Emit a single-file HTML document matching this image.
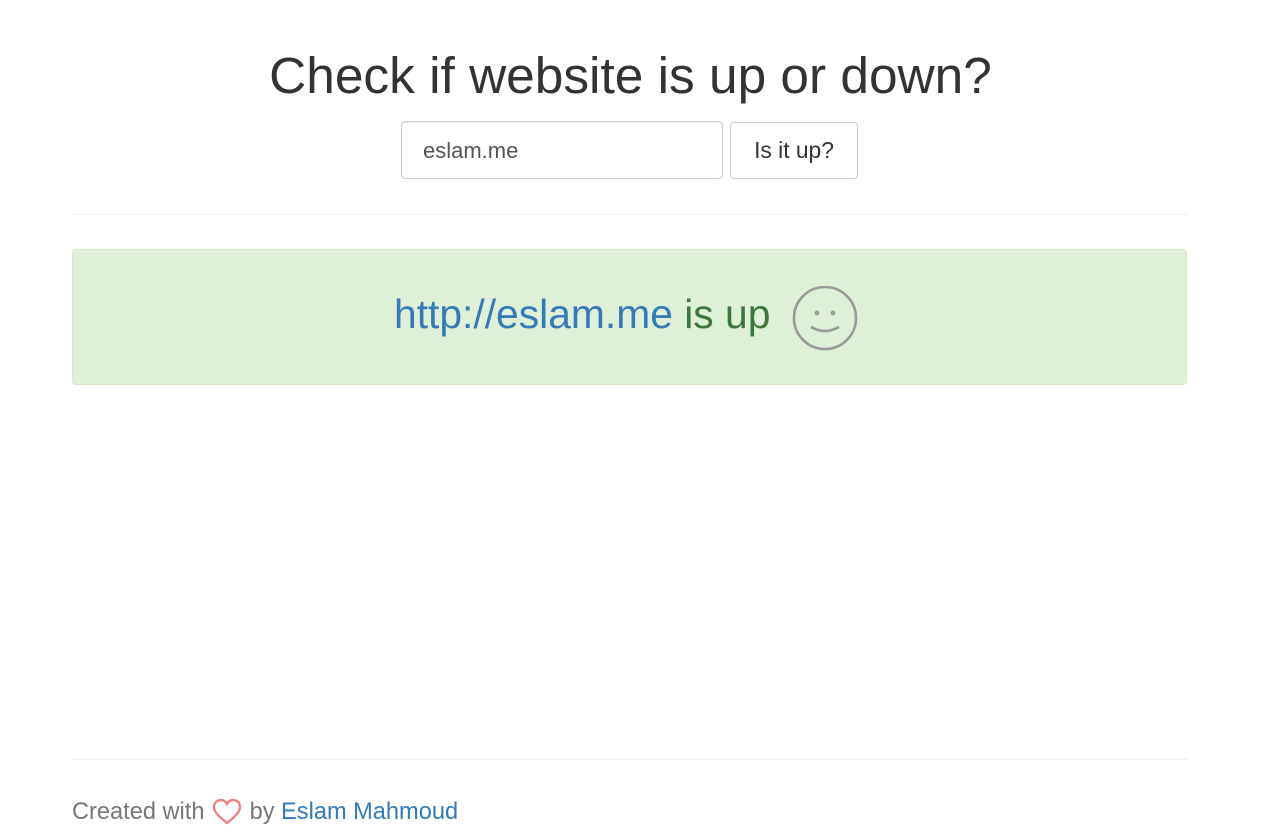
<!DOCTYPE html>
<html><head><meta charset="utf-8"><style>
body{margin:0;background:#fff;font-family:"Liberation Sans",sans-serif;color:#333;}
.wrap{position:relative;width:1261px;height:840px;}
h1{position:absolute;top:43px;left:0;width:1261px;text-align:center;margin:0;font-size:51.4px;font-weight:400;color:#333;line-height:64px;}
.inp{position:absolute;left:401px;top:121px;width:322px;height:58px;border:1px solid #ccc;border-radius:4px;box-sizing:border-box;font-size:22px;color:#555;padding:16px 21px;box-shadow:inset 0 1px 1px rgba(0,0,0,.075);}
.btn{position:absolute;left:730px;top:122px;width:128px;height:57px;border:1px solid #ccc;border-radius:4px;box-sizing:border-box;font-size:22.8px;color:#333;text-align:center;line-height:55px;}
.hr1{position:absolute;left:72px;width:1115px;top:214px;border-top:1px solid #eee;}
.hr2{position:absolute;left:72px;width:1115px;top:759px;border-top:1px solid #eee;}
.alert{position:absolute;left:72px;top:249px;width:1115px;height:136px;box-sizing:border-box;background:#dff0d8;border:1px solid #d6e9c6;border-radius:4px;}
.msg{position:absolute;left:394px;top:290px;font-size:40.8px;line-height:48px;color:#3c763d;white-space:nowrap;}
.msg a{color:#337ab7;text-decoration:none;}
.smile{position:absolute;left:791px;top:286px;}
.foot{position:absolute;left:72px;top:798px;font-size:23.6px;color:#777;white-space:nowrap;}
.foot a{color:#337ab7;text-decoration:none;}
</style></head><body><div class="wrap">
<h1>Check if website is up or down?</h1>
<div class="inp">eslam.me</div>
<div class="btn">Is it up?</div>
<div class="hr1"></div>
<div class="alert"></div>
<div class="msg"><a>http://eslam.me</a> is up</div>
<svg class="smile" width="68" height="66" viewBox="0 0 68 66"><g fill="none" stroke="#999" stroke-width="2.6"><circle cx="34" cy="32" r="31"/><path d="M20 41 Q34 49 48 41"/></g><circle cx="26" cy="27" r="2.4" fill="#999"/><circle cx="42" cy="27" r="2.4" fill="#999"/></svg>
<div class="hr2"></div>
<div class="foot">Created with <svg width="30" height="28" viewBox="0 0 30 28" style="vertical-align:-7px;margin:0 1px"><path d="M15 25 C9 20 2 15 2 9 C2 4 6 2 9 2 C12 2 14 4 15 6 C16 4 18 2 21 2 C24 2 28 4 28 9 C28 15 21 20 15 25Z" fill="none" stroke="#f27a7a" stroke-width="2.2"/></svg> by <a>Eslam Mahmoud</a></div>
</div></body></html>
